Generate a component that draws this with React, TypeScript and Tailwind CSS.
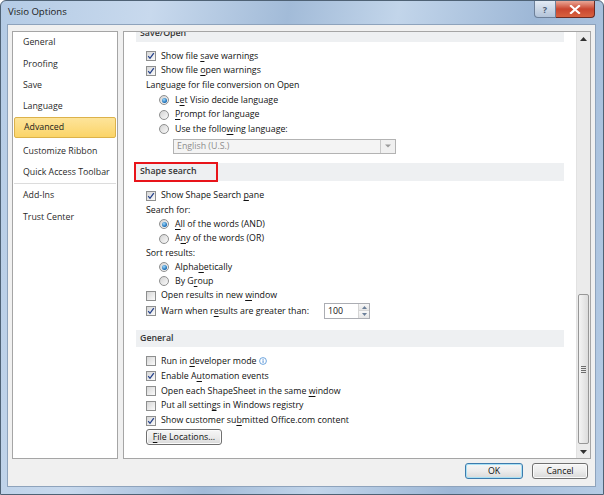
import React from "react";

const U = ({ children }: { children: React.ReactNode }) => (
  <span className="underline decoration-[0.8px] underline-offset-[1.5px]">{children}</span>
);

function Check({ checked }: { checked?: boolean }) {
  return (
    <span className="w-[10px] h-[10px] border border-[#8e8f8f] bg-gradient-to-br from-[#d6d6d6] to-[#fbfbfb] flex items-center justify-center shrink-0">
      {checked && (
        <svg width="8" height="8" viewBox="0 0 8 8">
          <path d="M1.2 4.2 L3 6.3 L6.8 1.2" stroke="#24418b" strokeWidth="1.3" fill="none" />
        </svg>
      )}
    </span>
  );
}

function Radio({ checked }: { checked?: boolean }) {
  return (
    <span className="w-[10px] h-[10px] rounded-full border border-[#8e8f8f] bg-gradient-to-br from-[#d2d2d2] to-[#fbfbfb] flex items-center justify-center shrink-0">
      {checked && (
        <span className="w-[5px] h-[5px] rounded-full bg-[radial-gradient(circle_at_40%_35%,#9fdcff,#1466b0_70%)]" />
      )}
    </span>
  );
}

function CheckRow({ checked, h, children }: { checked?: boolean; h: string; children: React.ReactNode }) {
  return (
    <div className={`flex items-center pl-[10px] gap-[5px] ${h}`}>
      <Check checked={checked} />
      <span>{children}</span>
    </div>
  );
}

function RadioRow({ checked, h, children }: { checked?: boolean; h: string; children: React.ReactNode }) {
  return (
    <div className={`flex items-center pl-[23px] gap-[6px] ${h}`}>
      <Radio checked={checked} />
      <span>{children}</span>
    </div>
  );
}

function LabelRow({ h, children }: { h: string; children: React.ReactNode }) {
  return <div className={`flex items-center pl-[10px] ${h}`}>{children}</div>;
}

function Band({ title, className = "", h = "h-[18px]", box }: { title: string; className?: string; h?: string; box?: boolean }) {
  return (
    <div className={`relative bg-[#eef0f2] flex items-center pl-[4px] font-semibold text-[#363636] ${h} ${className}`}>
      {title}
      {box && <div className="absolute left-[-2px] top-[-1px] w-[84px] h-[20px] border-2 border-[#e8141a]" />}
    </div>
  );
}

function NavItem({ label, active, className = "" }: { label: string; active?: boolean; className?: string }) {
  if (active) {
    return (
      <div
        className={`h-[21.3px] mx-[1px] pl-[9px] flex items-center rounded-[2px] border border-[#dcb24a] bg-gradient-to-b from-[#fde49a] to-[#fbd466] text-[#222] ${className}`}
      >
        {label}
      </div>
    );
  }
  return <div className={`h-[21.3px] pl-[10px] flex items-center text-[#2a2a2a] ${className}`}>{label}</div>;
}

function Btn({ children, focus, w }: { children: React.ReactNode; focus?: boolean; w: string }) {
  return (
    <div
      className={`${w} h-[16px] rounded-[3px] flex items-center justify-center text-[#111] bg-gradient-to-b from-[#f6f6f6] via-[#ececec] to-[#d9d9d9] border ${
        focus ? "border-[#3d7bad] shadow-[inset_0_0_0_1px_#a9e1f5]" : "border-[#707070] shadow-[inset_0_0_0_1px_#fbfbfb]"
      }`}
    >
      {children}
    </div>
  );
}

export default function App() {
  const r1 = "h-[14.6px]";
  const r2 = "h-[14.3px]";
  const r3 = "h-[14.8px]";
  return (
    <div className="w-[604px] h-[495px] flex flex-col overflow-hidden rounded-t-[6px] border border-[#4f6275] bg-[linear-gradient(100deg,#b4cbe5_0%,#c8d9ed_22%,#a2bbd8_42%,#c2d5ea_58%,#9db7d6_78%,#b6cce5_100%)] font-['Open_Sans','Noto_Sans',sans-serif] text-[8.8px] text-[#111] leading-none">
      {/* Title bar */}
      <div className="h-[23px] flex items-start shrink-0">
        <div className="pl-[7px] pt-[6px] text-[9.6px] text-[#1b1b1b]">Visio Options</div>
        <div className="flex-1" />
        <div className="flex mr-[8px]">
          <div className="w-[22px] h-[17px] rounded-bl-[4px] border border-t-0 border-[#6d8099] bg-gradient-to-b from-[#e2eaf4] via-[#cbd7e6] to-[#b3c4da] flex items-center justify-center text-[9px] font-bold text-[#4d5e73]">
            ?
          </div>
          <div className="w-[39px] h-[17px] rounded-br-[4px] border border-t-0 border-l-0 border-[#6b2a22] bg-gradient-to-b from-[#e9a696] via-[#c9452f] to-[#d8613f] flex items-center justify-center">
            <svg width="12" height="9" viewBox="0 0 12 9">
              <path d="M2 1 L10 8 M10 1 L2 8" stroke="#ffffff" strokeWidth="2.2" strokeLinecap="square" />
            </svg>
          </div>
        </div>
      </div>

      {/* Client */}
      <div className="ml-[6px] mr-[7px] mb-[7px] flex-1 bg-[#f0f0f0] border border-[#8ea3bc] flex flex-col pl-[4px] pr-[4px] pt-[6px]">
        <div className="flex gap-[5px] h-[428px]">
          {/* Nav */}
          <div className="w-[106px] bg-white border border-[#a5a5a5] flex flex-col">
            <NavItem label="General" />
            <NavItem label="Proofing" />
            <NavItem label="Save" />
            <NavItem label="Language" />
            <NavItem label="Advanced" active />
            <NavItem label="Customize Ribbon" className="mt-[2px]" />
            <NavItem label="Quick Access Toolbar" />
            <div className="h-px bg-[#dcdcdc] mx-[1px]" />
            <NavItem label="Add-Ins" className="mt-[1px]" />
            <NavItem label="Trust Center" />
          </div>

          {/* Content */}
          <div className="flex-1 bg-white border border-[#a5a5a5] flex">
            <div className="flex-1 overflow-hidden px-[12px]">
              <Band title="Save/Open" className="-mt-[8px]" />
              <div className="mt-[7px]">
                <CheckRow checked h={r1}>
                  Show file <U>s</U>ave warnings
                </CheckRow>
                <CheckRow checked h={r1}>
                  Show file <U>o</U>pen warnings
                </CheckRow>
                <LabelRow h={r1}>Language for file conversion on Open</LabelRow>
                <RadioRow checked h={r1}>
                  L<U>e</U>t Visio decide language
                </RadioRow>
                <RadioRow h={r1}>
                  <U>P</U>rompt for language
                </RadioRow>
                <RadioRow h={r1}>
                  Use the follo<U>w</U>ing language:
                </RadioRow>
              </div>
              <div className="mt-[2px] ml-[37px] w-[223px] h-[15px] border border-[#b3b3b3] bg-[#f4f4f4] flex items-center">
                <span className="flex-1 pl-[3px] text-[#8d8d8d]">English (U.S.)</span>
                <span className="w-[15px] h-full border-l border-[#c8c8c8] bg-[#f0f0f0] flex items-center justify-center">
                  <svg width="6" height="4" viewBox="0 0 6 4">
                    <path d="M0 0.5 H6 L3 3.5 Z" fill="#9a9a9a" />
                  </svg>
                </span>
              </div>

              <Band title="Shape search" className="mt-[9px]" box />
              <div className="mt-[8px]">
                <CheckRow checked h={r2}>
                  Show Shape Search <U>p</U>ane
                </CheckRow>
                <LabelRow h={r2}>Search for:</LabelRow>
                <RadioRow checked h={r2}>
                  <U>A</U>ll of the words (AND)
                </RadioRow>
                <RadioRow h={r2}>
                  A<U>n</U>y of the words (OR)
                </RadioRow>
                <LabelRow h={r2}>Sort results:</LabelRow>
                <RadioRow checked h={r2}>
                  Alpha<U>b</U>etically
                </RadioRow>
                <RadioRow h={r2}>
                  By G<U>r</U>oup
                </RadioRow>
                <CheckRow h={r2}>
                  Open results in new <U>w</U>indow
                </CheckRow>
                <div className="flex items-center pl-[10px] h-[16px]">
                  <Check checked />
                  <span className="ml-[5px] w-[163px]">
                    Warn when r<U>e</U>sults are greater than:
                  </span>
                  <div className="w-[46px] h-[16px] border border-[#abadb3] flex items-center bg-white">
                    <span className="flex-1 pl-[3px]">100</span>
                    <span className="w-[11px] h-full flex flex-col border-l border-[#d5d5d5]">
                      <span className="flex-1 flex items-center justify-center bg-gradient-to-b from-[#f7f7f7] to-[#e6e6e6] border-b border-[#d5d5d5]">
                        <svg width="5" height="3" viewBox="0 0 5 3">
                          <path d="M0 3 H5 L2.5 0 Z" fill="#6b7f99" />
                        </svg>
                      </span>
                      <span className="flex-1 flex items-center justify-center bg-gradient-to-b from-[#f7f7f7] to-[#e6e6e6]">
                        <svg width="5" height="3" viewBox="0 0 5 3">
                          <path d="M0 0 H5 L2.5 3 Z" fill="#6b7f99" />
                        </svg>
                      </span>
                    </span>
                  </div>
                </div>
              </div>

              <Band title="General" className="mt-[11px]" h="h-[17px]" />
              <div className="mt-[7px]">
                <CheckRow h={r3}>
                  <span className="inline-flex items-center gap-[2px]">
                    <span>
                      Run in <U>d</U>eveloper mode
                    </span>
                    <svg width="8" height="8" viewBox="0 0 8 8">
                      <circle cx="4" cy="4" r="3.4" fill="#ffffff" stroke="#4a8fd6" strokeWidth="0.8" />
                      <rect x="3.6" y="3.3" width="0.9" height="2.6" fill="#3b7fcf" />
                      <rect x="3.6" y="1.9" width="0.9" height="0.9" fill="#3b7fcf" />
                    </svg>
                  </span>
                </CheckRow>
                <CheckRow checked h={r3}>
                  Enable A<U>u</U>tomation events
                </CheckRow>
                <CheckRow h={r3}>
                  Open each ShapeSheet in the same <U>w</U>indow
                </CheckRow>
                <CheckRow h={r3}>
                  Put all settin<U>g</U>s in Windows registry
                </CheckRow>
                <CheckRow checked h={r3}>
                  Show customer su<U>b</U>mitted Office.com content
                </CheckRow>
              </div>
              <div className="mt-[1px] ml-[10px] w-[76px] h-[16px] rounded-[3px] border border-[#707070] bg-gradient-to-b from-[#f6f6f6] via-[#ececec] to-[#d9d9d9] shadow-[inset_0_0_0_1px_#fbfbfb] flex items-center justify-center">
                <span>
                  <U>F</U>ile Locations...
                </span>
              </div>
            </div>

            {/* Scrollbar */}
            <div className="w-[14px] bg-[#ebebeb] border-l border-[#e2e2e2] flex flex-col">
              <div className="h-[14px] flex items-center justify-center">
                <svg width="7" height="4" viewBox="0 0 7 4">
                  <path d="M0 4 H7 L3.5 0 Z" fill="#303030" />
                </svg>
              </div>
              <div className="flex-1 flex flex-col justify-end pb-[2px] px-[1px]">
                <div className="h-[150px] rounded-[2px] border border-[#979797] bg-gradient-to-r from-[#f4f4f4] to-[#dcdcdc] flex items-center justify-center">
                  <div className="flex flex-col gap-[1px]">
                    <div className="w-[5px] h-px bg-[#6c6c6c]" />
                    <div className="w-[5px] h-px bg-[#6c6c6c]" />
                    <div className="w-[5px] h-px bg-[#6c6c6c]" />
                    <div className="w-[5px] h-px bg-[#6c6c6c]" />
                  </div>
                </div>
              </div>
              <div className="h-[12px] flex items-center justify-center">
                <svg width="7" height="4" viewBox="0 0 7 4">
                  <path d="M0 0 H7 L3.5 4 Z" fill="#303030" />
                </svg>
              </div>
            </div>
          </div>
        </div>

        {/* Bottom buttons */}
        <div className="flex justify-end gap-[9px] mt-[4px] mr-[3px]">
          <Btn focus w="w-[58px]">
            OK
          </Btn>
          <Btn w="w-[56px]">Cancel</Btn>
        </div>
      </div>
    </div>
  );
}
